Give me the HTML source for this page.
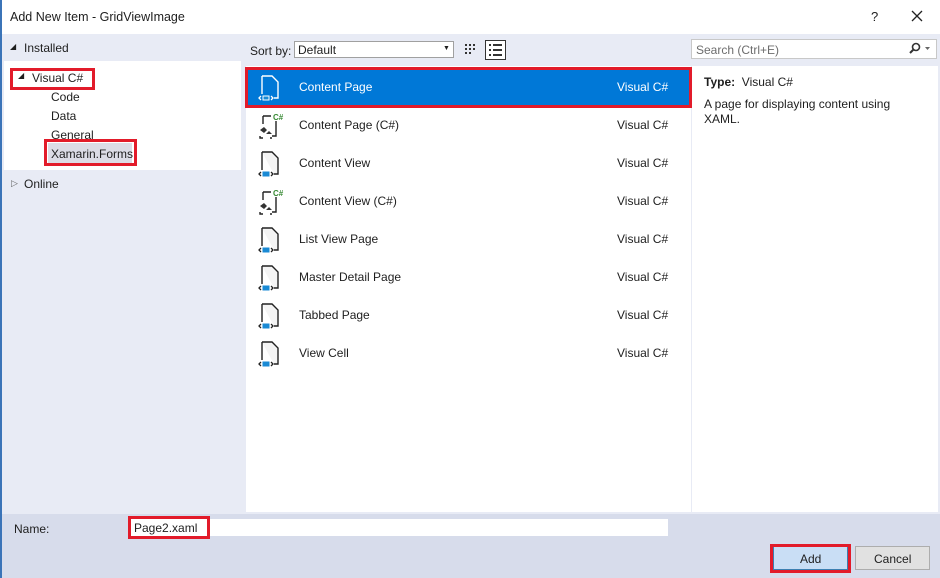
<!DOCTYPE html>
<html><head><style>
*{margin:0;padding:0;box-sizing:border-box}
body{width:940px;height:578px;overflow:hidden;background:#e8ebf5;font-family:"Liberation Sans",sans-serif;font-size:12px;color:#1e1e1e;position:relative}
.a{position:absolute}
.t{white-space:nowrap}
.red{position:absolute;border:3px solid #e21b2a}
.row{position:absolute;left:246px;width:444px;height:38px}
.row .n{position:absolute;left:53px;top:12px}
.row .v{position:absolute;left:371px;top:12px}
.row svg{position:absolute;left:10px;top:6px}
</style></head><body>
<div class="a" style="left:0;top:0;width:940px;height:34px;background:#fff"></div>
<div class="a" style="left:0;top:0;width:2px;height:578px;background:#3b74b8"></div>
<div class="a t" style="left:10px;top:10px;font-size:12.5px">Add New Item - GridViewImage</div>
<div class="a t" style="left:871px;top:9px;font-size:13px">?</div>
<svg class="a" style="left:911px;top:10px" width="12" height="12"><path d="M1 1L11 11M11 1L1 11" stroke="#222" stroke-width="1.3"/></svg>

<div class="a t" style="left:10px;top:42px;font-size:8px">&#9698;</div>
<div class="a t" style="left:24px;top:41px">Installed</div>
<div class="a" style="left:4px;top:61px;width:237px;height:109px;background:#fff"></div>
<div class="a t" style="left:18px;top:71px;font-size:8px">&#9698;</div>
<div class="a t" style="left:32px;top:71px">Visual C#</div>
<div class="red" style="left:10px;top:68px;width:85px;height:22px"></div>
<div class="a t" style="left:51px;top:90px">Code</div>
<div class="a t" style="left:51px;top:109px">Data</div>
<div class="a t" style="left:51px;top:128px">General</div>
<div class="a" style="left:48px;top:143px;width:84px;height:20px;background:#dcdce6"></div>
<div class="a t" style="left:51px;top:147px">Xamarin.Forms</div>
<div class="red" style="left:44px;top:139px;width:93px;height:27px"></div>
<div class="a t" style="left:11px;top:178px;font-size:9px;color:#666">&#9655;</div>
<div class="a t" style="left:24px;top:177px">Online</div>

<div class="a t" style="left:250px;top:44px">Sort by:</div>
<div class="a" style="left:294px;top:41px;width:160px;height:17px;background:#fff;border:1px solid #a0a0a0"></div>
<div class="a t" style="left:298px;top:43px">Default</div>
<div class="a t" style="left:443px;top:45px;font-size:7px">&#9660;</div>
<svg class="a" style="left:464px;top:43px" width="14" height="14"><g fill="#333"><rect x="1" y="1" width="2" height="2"/><rect x="5" y="1" width="2" height="2"/><rect x="9" y="1" width="2" height="2"/><rect x="1" y="5" width="2" height="2"/><rect x="5" y="5" width="2" height="2"/><rect x="9" y="5" width="2" height="2"/><rect x="1" y="9" width="2" height="2"/><rect x="5" y="9" width="2" height="2"/></g></svg>
<div class="a" style="left:485px;top:40px;width:21px;height:20px;border:1px solid #333;background:#fff"></div>
<svg class="a" style="left:488px;top:43px" width="15" height="14"><g fill="#333"><rect x="1" y="1" width="2" height="2"/><rect x="5" y="1" width="9" height="2"/><rect x="1" y="6" width="2" height="2"/><rect x="5" y="6" width="9" height="2"/><rect x="1" y="11" width="2" height="2"/><rect x="5" y="11" width="9" height="2"/></g></svg>
<div class="a" style="left:691px;top:39px;width:246px;height:20px;background:#fff;border:1px solid #c8c8c8"></div>
<div class="a t" style="left:696px;top:43px;color:#6d6d6d">Search (Ctrl+E)</div>
<svg class="a" style="left:908px;top:42px" width="24" height="14"><circle cx="8" cy="5" r="3.5" fill="none" stroke="#333" stroke-width="1.6"/><path d="M5.5 7.5L2 11" stroke="#333" stroke-width="2"/><path d="M17 5l2.5 3 2.5-3z" fill="#666"/></svg>

<div class="a" style="left:246px;top:66px;width:445px;height:446px;background:#fff"></div>
<div class="a" style="left:692px;top:66px;width:246px;height:446px;background:#fff"></div>

<div class="row" style="top:68px;background:#0078d7;color:#fff">
<svg width="28" height="28" viewBox="0 0 28 28"><path d="M6 2h10l6 6v16h-4M6 2v18" fill="none" stroke="#fff" stroke-width="1.4"/><path d="M5 26l-2-2 2-2M15 22l2 2-2 2" fill="none" stroke="#fff" stroke-width="1.3"/><rect x="6.5" y="21.5" width="7" height="5" fill="#fff"/><rect x="7.5" y="22.5" width="5" height="3" fill="#1a8ad4"/></svg>
<div class="n">Content Page</div><div class="v">Visual C#</div></div>
<div class="red" style="left:245px;top:67px;width:447px;height:41px"></div>

<div class="row" style="top:106px">
<svg width="30" height="28" viewBox="0 0 30 28"><path d="M7 4h8M20 9v15h-4M7 4v8" fill="none" stroke="#222" stroke-width="1.4"/><text x="17" y="8" font-size="8" font-weight="bold" fill="#388a34" font-family="Liberation Sans">C#</text><path d="M4 18l4-3 3 3-3 3zM10 22l3-3 3 3" fill="#333"/><path d="M4 24v2h3M14 26h2" stroke="#222" stroke-width="1.4" fill="none"/></svg>
<div class="n">Content Page (C#)</div><div class="v">Visual C#</div></div>

<div class="row" style="top:144px">
<svg width="28" height="28" viewBox="0 0 28 28"><path d="M6 2h10l6 6v16h-4M6 2v18" fill="#f4f4f4" stroke="#222" stroke-width="1.4"/><path d="M5 26l-2-2 2-2M15 22l2 2-2 2" fill="none" stroke="#222" stroke-width="1.3"/><rect x="6.5" y="21.5" width="7" height="5" fill="#1a8ad4"/></svg>
<div class="n">Content View</div><div class="v">Visual C#</div></div>

<div class="row" style="top:182px">
<svg width="30" height="28" viewBox="0 0 30 28"><path d="M7 4h8M20 9v15h-4M7 4v8" fill="none" stroke="#222" stroke-width="1.4"/><text x="17" y="8" font-size="8" font-weight="bold" fill="#388a34" font-family="Liberation Sans">C#</text><path d="M4 18l4-3 3 3-3 3zM10 22l3-3 3 3" fill="#333"/><path d="M4 24v2h3M14 26h2" stroke="#222" stroke-width="1.4" fill="none"/></svg>
<div class="n">Content View (C#)</div><div class="v">Visual C#</div></div>

<div class="row" style="top:220px">
<svg width="28" height="28" viewBox="0 0 28 28"><path d="M6 2h10l6 6v16h-4M6 2v18" fill="#f4f4f4" stroke="#222" stroke-width="1.4"/><path d="M5 26l-2-2 2-2M15 22l2 2-2 2" fill="none" stroke="#222" stroke-width="1.3"/><rect x="6.5" y="21.5" width="7" height="5" fill="#1a8ad4"/></svg>
<div class="n">List View Page</div><div class="v">Visual C#</div></div>

<div class="row" style="top:258px">
<svg width="28" height="28" viewBox="0 0 28 28"><path d="M6 2h10l6 6v16h-4M6 2v18" fill="#f4f4f4" stroke="#222" stroke-width="1.4"/><path d="M5 26l-2-2 2-2M15 22l2 2-2 2" fill="none" stroke="#222" stroke-width="1.3"/><rect x="6.5" y="21.5" width="7" height="5" fill="#1a8ad4"/></svg>
<div class="n">Master Detail Page</div><div class="v">Visual C#</div></div>

<div class="row" style="top:296px">
<svg width="28" height="28" viewBox="0 0 28 28"><path d="M6 2h10l6 6v16h-4M6 2v18" fill="#f4f4f4" stroke="#222" stroke-width="1.4"/><path d="M5 26l-2-2 2-2M15 22l2 2-2 2" fill="none" stroke="#222" stroke-width="1.3"/><rect x="6.5" y="21.5" width="7" height="5" fill="#1a8ad4"/></svg>
<div class="n">Tabbed Page</div><div class="v">Visual C#</div></div>

<div class="row" style="top:334px">
<svg width="28" height="28" viewBox="0 0 28 28"><path d="M6 2h10l6 6v16h-4M6 2v18" fill="#f4f4f4" stroke="#222" stroke-width="1.4"/><path d="M5 26l-2-2 2-2M15 22l2 2-2 2" fill="none" stroke="#222" stroke-width="1.3"/><rect x="6.5" y="21.5" width="7" height="5" fill="#1a8ad4"/></svg>
<div class="n">View Cell</div><div class="v">Visual C#</div></div>

<div class="a t" style="left:704px;top:75px"><b>Type:</b>&nbsp; Visual C#</div>
<div class="a" style="left:704px;top:97px;width:220px;line-height:15px">A page for displaying content using XAML.</div>

<div class="a" style="left:2px;top:514px;width:938px;height:64px;background:#d7dceb"></div>
<div class="a t" style="left:14px;top:522px">Name:</div>
<div class="a" style="left:130px;top:519px;width:538px;height:17px;background:#fff"></div>
<div class="a t" style="left:134px;top:521px">Page2.xaml</div>
<div class="red" style="left:128px;top:516px;width:82px;height:23px"></div>
<div class="a" style="left:773px;top:546px;width:75px;height:24px;background:#c9def5;border:1px solid #3c7fb1"></div>
<div class="a t" style="left:800px;top:552px">Add</div>
<div class="red" style="left:770px;top:544px;width:81px;height:29px"></div>
<div class="a" style="left:855px;top:546px;width:75px;height:24px;background:#e1e1e1;border:1px solid #adadad"></div>
<div class="a t" style="left:874px;top:552px">Cancel</div>
</body></html>
